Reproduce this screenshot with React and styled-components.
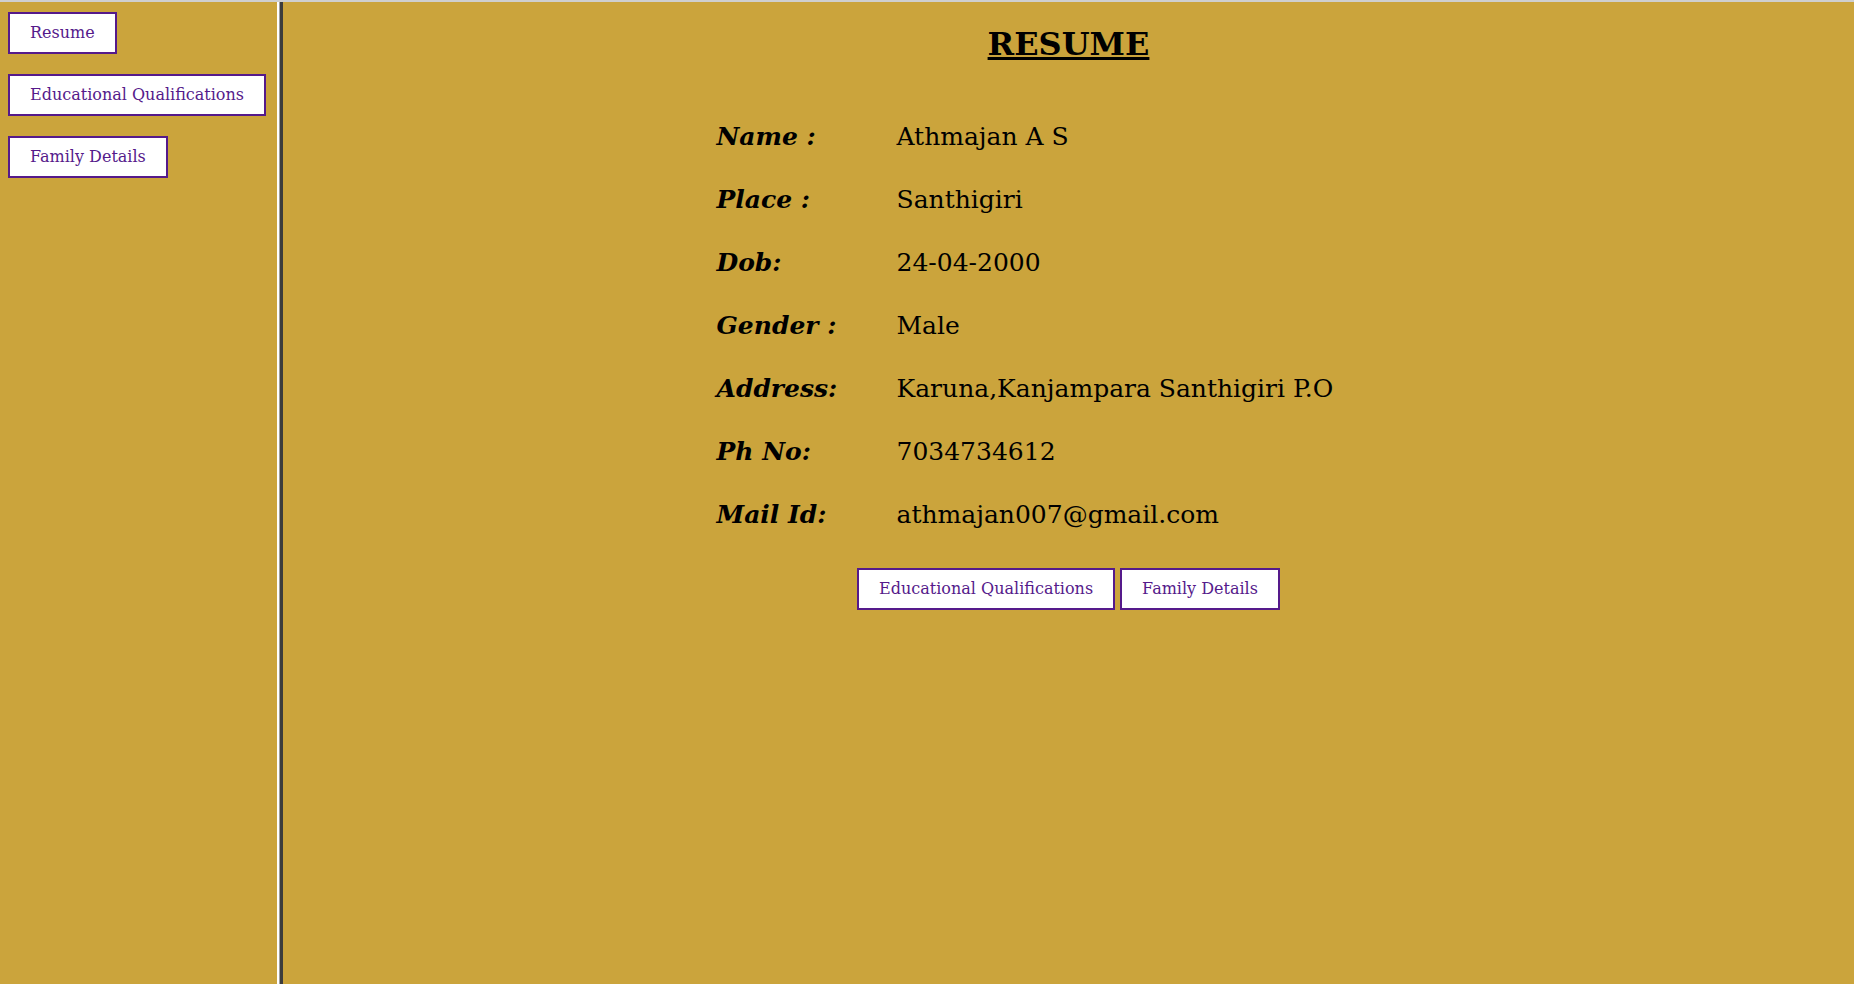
import React from "react";
import styled, { createGlobalStyle } from "styled-components";

const GOLD = "#cba43c";
const PURPLE = "#551a8b";

const Global = createGlobalStyle`
  html, body { margin: 0; padding: 0; height: 100%; }
  body { font-family: "DejaVu Serif", serif; background: ${GOLD}; overflow: hidden; }
  #root { height: 100%; }
`;

const Frameset = styled.div`
  height: 100vh;
  display: flex;
  flex-direction: column;
  border-top: 2px solid #cfcfcf;
  box-sizing: border-box;
`;

const Frames = styled.div`
  flex: 1;
  display: flex;
  min-height: 0;
`;

const Sidebar = styled.nav`
  width: 277px;
  flex: none;
  background: ${GOLD};
  padding: 10px 8px 0;
  box-sizing: border-box;
  display: flex;
  flex-direction: column;
  align-items: flex-start;
  gap: 20px;
`;

const Divider = styled.div`
  width: 6px;
  flex: none;
  display: flex;
`;

const Stripe = styled.div`
  width: ${(p) => p.$w}px;
  background: ${(p) => p.$c};
`;

const Main = styled.main`
  flex: 1;
  background: ${GOLD};
  display: flex;
  flex-direction: column;
  align-items: center;
`;

const Title = styled.h1`
  margin: 24px 0 0;
  font-size: 32px;
  line-height: 37px;
  font-weight: bold;
  text-decoration: underline;
  color: #000;
`;

const Details = styled.div`
  margin-top: 42px;
  width: 706px;
  padding-left: 1px;
  box-sizing: border-box;
  display: grid;
  grid-template-columns: 180px auto;
  grid-auto-rows: 63px;
  align-items: center;
  font-size: 25px;
  line-height: 29px;
  color: #000;
`;

const Label = styled.div`
  font-weight: bold;
  font-style: italic;
`;

const Value = styled.div``;

const Actions = styled.div`
  margin-top: 22px;
  display: flex;
  gap: 5px;
`;

const NavButton = styled.button`
  font-family: "DejaVu Serif", serif;
  font-size: 16px;
  line-height: 18px;
  padding: 10px 20px;
  border: 2px solid ${PURPLE};
  background: #fff;
  color: ${PURPLE};
  cursor: pointer;
  border-radius: 0;
  margin: 0;
`;

const rows = [
  ["Name :", "Athmajan A S"],
  ["Place :", "Santhigiri"],
  ["Dob:", "24-04-2000"],
  ["Gender :", "Male"],
  ["Address:", "Karuna,Kanjampara Santhigiri P.O"],
  ["Ph No:", "7034734612"],
  ["Mail Id:", "athmajan007@gmail.com"],
];

export default function App() {
  return (
    <>
      <Global />
      <Frameset>
        <Frames>
          <Sidebar>
            <NavButton>Resume</NavButton>
            <NavButton>Educational Qualifications</NavButton>
            <NavButton>Family Details</NavButton>
          </Sidebar>
          <Divider>
            <Stripe $w={2} $c="#ffffff" />
            <Stripe $w={1} $c="#a0a0a0" />
            <Stripe $w={3} $c="#3c3c3c" />
          </Divider>
          <Main>
            <Title>RESUME</Title>
            <Details>
              {rows.map(([l, v]) => (
                <React.Fragment key={l}>
                  <Label>{l}</Label>
                  <Value>{v}</Value>
                </React.Fragment>
              ))}
            </Details>
            <Actions>
              <NavButton>Educational Qualifications</NavButton>
              <NavButton>Family Details</NavButton>
            </Actions>
          </Main>
        </Frames>
      </Frameset>
    </>
  );
}
